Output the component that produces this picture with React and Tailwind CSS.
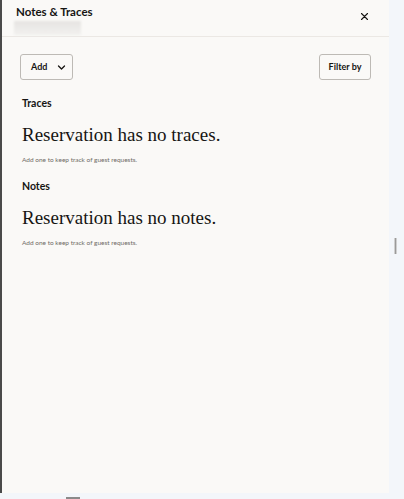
import React from 'react';

const Chevron = () => (
    <svg width="9" height="9" viewBox="0 0 24 24" fill="none" stroke="currentColor" strokeWidth="3.5" strokeLinecap="round" strokeLinejoin="round">
        <path d="M4 8l8 8 8-8" />
    </svg>
);

const Close = () => (
    <svg width="9" height="9" viewBox="0 0 24 24" fill="none" stroke="currentColor" strokeWidth="3" strokeLinecap="round">
        <path d="M4 4l16 16M20 4L4 20" />
    </svg>
);

const EmptySection = ({ label, message }) => (
    <div className="flex flex-col">
        <div className="text-[10.5px] font-bold text-[#161513] leading-none">{label}</div>
        <div className="mt-[16px] text-[19px] leading-none text-[#161513] font-['Liberation_Serif',serif]">{message}</div>
        <div className="mt-[13px] text-[6.5px] leading-none text-[#6f6b66]">Add one to keep track of guest requests.</div>
    </div>
);

export default function App() {
    return (
        <div className="w-[404px] h-[499px] bg-[#f3f6fa] flex flex-col font-['Lato','Liberation_Sans',sans-serif]">
            <div className="flex h-[493px]">
                <div className="w-[389px] bg-[#faf9f7] border-l-2 border-[#4a4a4a] flex flex-col">
                    <div className="h-[37px] border-b border-[#ebe8e4] flex justify-between pl-[14px] pr-[20px]">
                        <div className="flex flex-col">
                            <div className="pt-[6px] text-[11.5px] font-bold text-[#161513] leading-none">Notes &amp; Traces</div>
                            <div className="mt-[3px] -ml-[2px] w-[67px] h-[14px] bg-gradient-to-b from-[#e6e4e2] to-[#f2f1ef] blur-[1px]"></div>
                        </div>
                        <div className="pt-[12px] text-[#161513]"><Close /></div>
                    </div>
                    <div className="flex justify-between pl-[18px] pr-[18px] pt-[17px]">
                        <button className="h-[26px] w-[53px] border border-[#bdbab5] rounded-[3px] flex items-center pl-[10px] gap-[10px] text-[9px] font-bold text-[#161513]">
                            Add <Chevron />
                        </button>
                        <button className="h-[26px] w-[52px] border border-[#bdbab5] rounded-[3px] flex items-center justify-center text-[9px] font-bold text-[#161513]">
                            Filter by
                        </button>
                    </div>
                    <div className="pl-[20px] pt-[18px] flex flex-col gap-[18px]">
                        <EmptySection label="Traces" message="Reservation has no traces." />
                        <EmptySection label="Notes" message="Reservation has no notes." />
                    </div>
                </div>
                <div className="flex-1 relative">
                    <div className="absolute left-[5px] top-[238px] w-[3px] h-[16px] bg-[#9a9a9a] border-x border-[#cfcfcf]"></div>
                </div>
            </div>
            <div className="flex-1 relative">
                <div className="absolute left-[66px] top-[4px] w-[14px] h-[2px] bg-[#8a8a8a]"></div>
            </div>
        </div>
    );
}
